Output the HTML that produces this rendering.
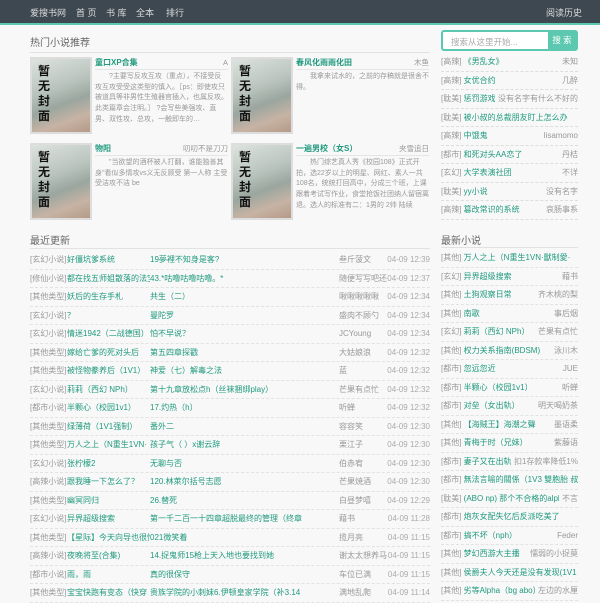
<!DOCTYPE html>
<html><head><meta charset="utf-8"><style>
*{margin:0;padding:0;box-sizing:border-box}
body{width:600px;height:600px;overflow:hidden;background:#f8f8f8;font-family:"Liberation Sans","Noto Sans CJK SC",sans-serif;color:#999;font-size:8px}
a{color:#1f9a7e;text-decoration:none}
.hd{height:25px;background:#3d4850;border-bottom:2px solid #5cc8b0;position:relative;color:#ddd;font-size:9px}
.hd span{position:absolute;top:6px}
.h2{position:absolute;font-size:10px;color:#666}
.line{position:absolute;height:1px;background:#e2e2e2}
.card{position:absolute;width:198px;height:77px}
.cov{position:absolute;left:0;top:0;width:62px;height:77px;border:2px solid #ddd;background:linear-gradient(160deg,#dde3df 0%,#b9c3bd 40%,#9aa69f 60%,#c7b3a4 80%,#b59a88 100%)}
.cov b{position:absolute;left:6px;top:5px;width:14px;font-size:12px;line-height:15px;color:#111;font-weight:bold}
.ct{position:absolute;left:65px;top:0;right:0;height:13px;line-height:12px;border-bottom:1px solid #e5e5e5;font-weight:bold;font-size:8px}
.ct i{float:right;font-style:normal;font-weight:normal;color:#999;font-size:7.5px}
.cd{position:absolute;left:65px;top:15px;right:0;line-height:10.7px;text-indent:2em;font-size:7px;color:#999;overflow:hidden;height:64px}
.srch{position:absolute;left:441px;top:30px;width:137px;height:21px;border:2px solid #5cc8b0;border-radius:3px;background:#fff}
.srch span{position:absolute;left:8px;top:4px;color:#aaa;font-size:8.5px}
.srch em{position:absolute;right:0;top:0;width:28px;height:17px;background:#5cc8b0;color:#fff;font-style:normal;text-align:center;line-height:17px;font-size:8.5px}
.rl{position:absolute;left:441px;width:137px;top:53px}
.rl div{height:18.5px;line-height:18px;border-bottom:1px dashed #ddd;white-space:nowrap;overflow:hidden;position:relative}
.rl i{position:absolute;right:0;top:0;font-style:normal;color:#999;background:#f8f8f8;padding-left:3px}
.up{position:absolute;left:30px;width:400px;top:251px}
.up div{height:18.5px;line-height:18.5px;border-bottom:1px dashed #e2e2e2;position:relative;white-space:nowrap}
.up span{position:absolute;overflow:hidden}
.c1{left:0}.c2{left:37px;width:83px}.c3{left:120px;width:180px}.c4{left:309px;color:#999}.c5{right:0;color:#aaa}
.nl{position:absolute;left:441px;width:137px;top:249px}
.nl div{height:18.5px;line-height:18.5px;border-bottom:1px dashed #e2e2e2;position:relative;white-space:nowrap;overflow:hidden}
.nl i{position:absolute;right:0;font-style:normal;background:#f8f8f8;padding-left:3px}
</style></head><body>
<div class="hd"><span style="left:30px">爱搜书网</span><span style="left:76px">首 页</span><span style="left:106px">书 库</span><span style="left:136px">全本</span><span style="left:166px">排行</span><span style="left:546px">阅读历史</span></div>
<div class="h2" style="left:30px;top:34px">热门小说推荐</div>
<div class="line" style="left:30px;top:52px;width:400px"></div>
<div class="card" style="left:30px;top:57px"><div class="cov"><b>暂无封面</b></div><div class="ct"><a>童口XP合集</a><i>A</i></div><div class="cd">?主要写反攻互攻（重点），不接受反攻互攻受受这类型的慎入。［ps：即使攻只被道具等非男性生殖器官插入，也属反攻。此类篇章会注明。］ ?会写些美强攻、直男、双性攻、总攻，一触即车的…</div></div>
<div class="card" style="left:231px;top:57px"><div class="cov"><b>暂无封面</b></div><div class="ct"><a>春风化雨雨化田</a><i>木鱼</i></div><div class="cd">我拿来试水的，之前的存稿就是很舍不得。</div></div>
<div class="card" style="left:30px;top:143px"><div class="cov"><b>暂无封面</b></div><div class="ct"><a>物阳</a><i>叨叨不是刀刀</i></div><div class="cd">"当欲望的酒杯被人打翻，谁能独善其身"看似多情攻vs义无反顾受 第一人称 主受 受洁攻不洁 be</div></div>
<div class="card" style="left:231px;top:143px"><div class="cov"><b>暂无封面</b></div><div class="ct"><a>一遍男校（女S）</a><i>夹雪追日</i></div><div class="cd">热门综艺真人秀《校园108》正式开拍，选22岁以上的明星、网红、素人一共108名，统统打回高中，分成三个班，上课跟着考试写作业，食堂抢饭社团纳人留宿离退。选人的标准有二：1男的 2帅 陆续</div></div>
<div class="srch"><span>搜索从这里开始...</span><em>搜 索</em></div>
<div class="rl">
<div>[高辣] <a>《男乱女》</a><i>未知</i></div>
<div>[高辣] <a>女优合约</a><i>几醉</i></div>
<div>[耽美] <a>惩罚游戏</a><i>没有名字有什么不好的</i></div>
<div>[耽美] <a>被小叔的总裁朋友盯上怎么办</a></div>
<div>[高辣] <a>中饿鬼</a><i>lisamomo</i></div>
<div>[都市] <a>和死对头AA恋了</a><i>丹桔</i></div>
<div>[玄幻] <a>大学表演社团</a><i>不详</i></div>
<div>[耽美] <a>yy小说</a><i>没有名字</i></div>
<div>[高辣] <a>篡改常识的系统</a><i>哀肠事系</i></div>
</div>
<div class="h2" style="left:30px;top:232px">最近更新</div>
<div class="line" style="left:30px;top:248px;width:400px"></div>
<div class="up">
<div><span class="c1">[玄幻小说]</span><span class="c2"><a>好僵坑爹系统</a></span><span class="c3"><a>19夢裡不知身是客?</a></span><span class="c4">叁斤菠文</span><span class="c5">04-09 12:39</span></div>
<div><span class="c1">[修仙小说]</span><span class="c2"><a>都在找五师姐散落的法宝</a></span><span class="c3"><a>43.*咕噜咕噜咕噜。*</a></span><span class="c4">随便写写吧还</span><span class="c5">04-09 12:37</span></div>
<div><span class="c1">[其他类型]</span><span class="c2"><a>妖后的生存手札</a></span><span class="c3"><a>共生（二）</a></span><span class="c4">啾啾啾啾啾</span><span class="c5">04-09 12:34</span></div>
<div><span class="c1">[玄幻小说]</span><span class="c2"><a>？</a></span><span class="c3"><a>曼陀罗</a></span><span class="c4">盛肉不顾勺</span><span class="c5">04-09 12:34</span></div>
<div><span class="c1">[玄幻小说]</span><span class="c2"><a>情迷1942（二战德国）</a></span><span class="c3"><a>怕不早说？</a></span><span class="c4">JCYoung</span><span class="c5">04-09 12:34</span></div>
<div><span class="c1">[其他类型]</span><span class="c2"><a>嫁给亡爹的死对头后</a></span><span class="c3"><a>第五四章探戳</a></span><span class="c4">大姑娘浪</span><span class="c5">04-09 12:32</span></div>
<div><span class="c1">[其他类型]</span><span class="c2"><a>被怪物豢养后（1V1）</a></span><span class="c3"><a>神爱（七）解毒之法</a></span><span class="c4">蓝</span><span class="c5">04-09 12:32</span></div>
<div><span class="c1">[玄幻小说]</span><span class="c2"><a>莉莉（西幻 NPh）</a></span><span class="c3"><a>第十九章放松点h（丝袜捆绑play）</a></span><span class="c4">芒果有点忙</span><span class="c5">04-09 12:32</span></div>
<div><span class="c1">[都市小说]</span><span class="c2"><a>半颗心（校园1v1）</a></span><span class="c3"><a>17.灼热（h）</a></span><span class="c4">听蝉</span><span class="c5">04-09 12:32</span></div>
<div><span class="c1">[其他类型]</span><span class="c2"><a>绿薄荷（1V1强制）</a></span><span class="c3"><a>番外二</a></span><span class="c4">容容笑</span><span class="c5">04-09 12:30</span></div>
<div><span class="c1">[其他类型]</span><span class="c2"><a>万人之上（N重生1VN·</a></span><span class="c3"><a>孩子气（ ）x谢云辞</a></span><span class="c4">栗江子</span><span class="c5">04-09 12:30</span></div>
<div><span class="c1">[玄幻小说]</span><span class="c2"><a>张柠檬2</a></span><span class="c3"><a>无聊与否</a></span><span class="c4">伯赤宥</span><span class="c5">04-09 12:30</span></div>
<div><span class="c1">[高辣小说]</span><span class="c2"><a>跟我睡一下怎么了？</a></span><span class="c3"><a>120.林萊尔括号志愿</a></span><span class="c4">芒果焼酒</span><span class="c5">04-09 12:30</span></div>
<div><span class="c1">[其他类型]</span><span class="c2"><a>幽冥同归</a></span><span class="c3"><a>26.替死</a></span><span class="c4">白昼梦嘻</span><span class="c5">04-09 12:29</span></div>
<div><span class="c1">[玄幻小说]</span><span class="c2"><a>异界超级搜索</a></span><span class="c3"><a>第一千二百一十四章超脱最终的管理（终章</a></span><span class="c4">藉书</span><span class="c5">04-09 11:28</span></div>
<div><span class="c1">[其他类型]</span><span class="c2"><a>【星际】今天向导也很忙</a></span><span class="c3"><a>021微笑着</a></span><span class="c4">揽月亮</span><span class="c5">04-09 11:15</span></div>
<div><span class="c1">[高辣小说]</span><span class="c2"><a>夜晚将至(合集)</a></span><span class="c3"><a>14.捉鬼师15枪上天入地也要找到她</a></span><span class="c4">谢太太想养马</span><span class="c5">04-09 11:15</span></div>
<div><span class="c1">[都市小说]</span><span class="c2"><a>雨，雨</a></span><span class="c3"><a>真的很保守</a></span><span class="c4">车位已满</span><span class="c5">04-09 11:15</span></div>
<div><span class="c1">[其他类型]</span><span class="c2"><a>宝宝快跑有变态（快穿</a></span><span class="c3"><a>贵族学院的小刺妹6.伊顿皇家学院（补3.14</a></span><span class="c4">满地乱爬</span><span class="c5">04-09 11:14</span></div>
</div>
<div class="h2" style="left:441px;top:232px">最新小说</div>
<div class="line" style="left:441px;top:247px;width:137px"></div>
<div class="nl">
<div>[其他] <a>万人之上（N重生1VN·獸制愛·</a></div>
<div>[玄幻] <a>异界超级搜索</a><i>藉书</i></div>
<div>[其他] <a>土狗观察日常</a><i>齐木桃的梨</i></div>
<div>[其他] <a>南歌</a><i>事后烟</i></div>
<div>[玄幻] <a>莉莉（西幻 NPh）</a><i>芒果有点忙</i></div>
<div>[其他] <a>权力关系指南(BDSM)</a><i>泳川木</i></div>
<div>[都市] <a>忽远忽近</a><i>JUE</i></div>
<div>[都市] <a>半颗心（校园1v1）</a><i>听蝉</i></div>
<div>[都市] <a>对垒（女出轨）</a><i>明天喝奶茶</i></div>
<div>[其他] <a>【海贼王】海潮之聲</a><i>墨语柔</i></div>
<div>[其他] <a>青梅于时（兄妹）</a><i>紫藤语</i></div>
<div>[都市] <a>妻子又在出轨</a><i>扣1存款率降低1%</i></div>
<div>[都市] <a>無法言喻的關係（1V3 雙胞胎 叔</a></div>
<div>[耽美] <a>(ABO np) 那个不合格的alpha</a><i>不言</i></div>
<div>[都市] <a>炮灰女配失忆后反派吃美了</a></div>
<div>[都市] <a>搞不坏（nph）</a><i>Feder</i></div>
<div>[其他] <a>梦幻西游大主播</a><i>懦弱的小捉莫</i></div>
<div>[其他] <a>侯爵夫人今天还是没有发现(1V1</a></div>
<div>[其他] <a>劣等Alpha（bg abo）</a><i>左边的水厘</i></div>
</div>
</body></html>
